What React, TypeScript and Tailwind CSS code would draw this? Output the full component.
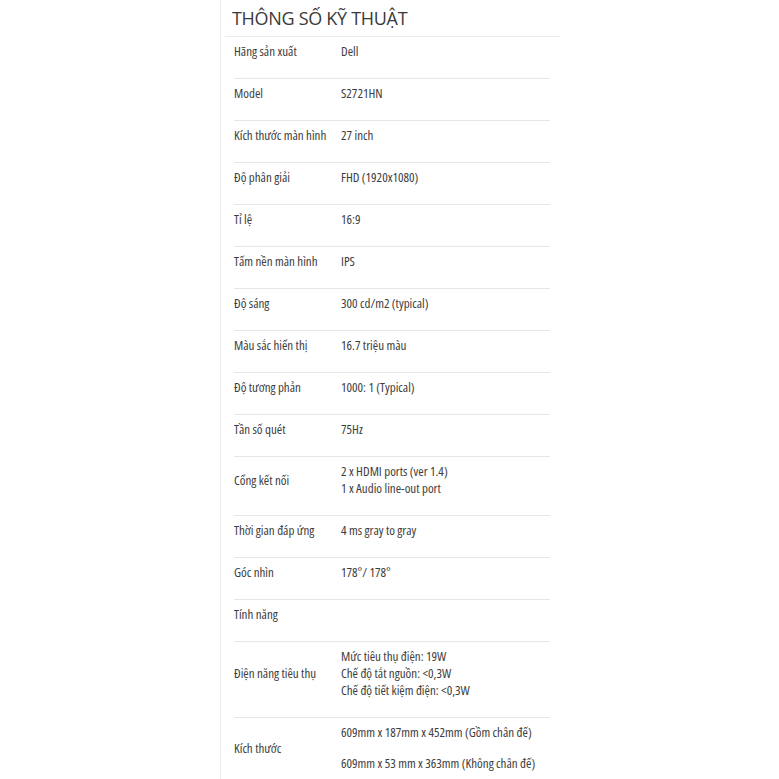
import React from "react";

type Spec = {
  label: string;
  values: string[];
  gap?: boolean;
};

const specs: Spec[] = [
  { label: "Hãng sản xuất", values: ["Dell"] },
  { label: "Model", values: ["S2721HN"] },
  { label: "Kích thước màn hình", values: ["27 inch"] },
  { label: "Độ phân giải", values: ["FHD (1920x1080)"] },
  { label: "Tỉ lệ", values: ["16:9"] },
  { label: "Tấm nền màn hình", values: ["IPS"] },
  { label: "Độ sáng", values: ["300 cd/m2 (typical)"] },
  { label: "Màu sắc hiển thị", values: ["16.7 triệu màu"] },
  { label: "Độ tương phản", values: ["1000: 1 (Typical)"] },
  { label: "Tần số quét", values: ["75Hz"] },
  { label: "Cổng kết nối", values: ["2 x HDMI ports (ver 1.4)", "1 x Audio line-out port"] },
  { label: "Thời gian đáp ứng", values: ["4 ms gray to gray"] },
  { label: "Góc nhìn", values: ["178°/ 178°"] },
  { label: "Tính năng", values: [""] },
  {
    label: "Điện năng tiêu thụ",
    values: ["Mức tiêu thụ điện: 19W", "Chế độ tắt nguồn: <0,3W", "Chế độ tiết kiệm điện: <0,3W"],
  },
  {
    label: "Kích thước",
    values: ["609mm x 187mm x 452mm (Gồm chân đế)", "609mm x 53 mm x 363mm (Không chân đế)"],
    gap: true,
  },
];

export default function App() {
  return (
    <div className="min-h-[779px] bg-white font-['Open_Sans',sans-serif] text-[#333]">
      <div className="ml-[220px] min-h-[779px] w-[340px] border-l border-[#ececec]">
        {/* header */}
        <div className="ml-[4px] flex h-[37px] items-center border-b border-[#ececec] pl-[7px]">
          <h2 className="text-[18px] tracking-[-0.3px] text-[#3a3a3a]">THÔNG SỐ KỸ THUẬT</h2>
        </div>

        {/* spec rows */}
        <div className="ml-[13px] w-[316px] text-[#3d3d3d] [font-stretch:condensed]">
          {specs.map((s, i) => (
            <div
              key={s.label}
              className={`flex items-center pt-[6px] pb-[18px] text-[13px] leading-[17px] ${
                i < specs.length - 1 ? "border-b border-[#e6e6e6]" : ""
              }`}
            >
              <div className="w-[107px] shrink-0 whitespace-nowrap">{s.label}</div>
              <div className="min-h-[17px] whitespace-nowrap">
                {s.values.map((v, j) => (
                  <div key={j} className={s.gap && j > 0 ? "mt-[14px]" : ""}>
                    {v}
                  </div>
                ))}
              </div>
            </div>
          ))}
        </div>
      </div>
    </div>
  );
}
